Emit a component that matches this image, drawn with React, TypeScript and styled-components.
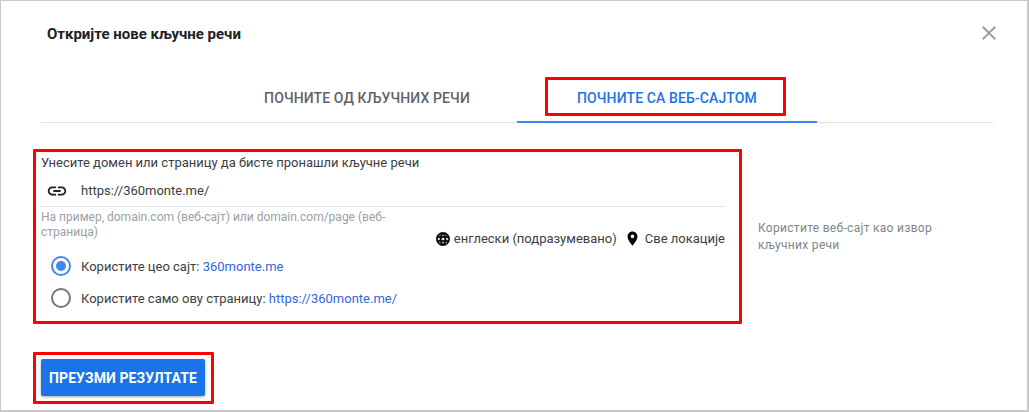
import React from 'react';
import styled, { createGlobalStyle } from 'styled-components';

const GlobalStyle = createGlobalStyle`
  html, body {
    margin: 0;
    padding: 0;
    background: #fff;
  }
  body {
    font-family: Roboto, "Noto Sans", sans-serif;
  }
`;

const Page = styled.div`
  width: 1029px;
  height: 412px;
  box-sizing: border-box;
  overflow: hidden;
  background: #c9c9c9;
  padding: 1px 2px 2px 1px;
`;

const Dialog = styled.div`
  height: 100%;
  box-sizing: border-box;
  background: #fff;
  padding: 0 34px 0 40px;
  display: flex;
  flex-direction: column;
`;

const TitleRow = styled.div`
  height: 72px;
  flex: none;
  display: flex;
  justify-content: space-between;
  align-items: flex-start;
`;

const Title = styled.h1`
  margin: 24px 0 0 6px;
  font-size: 15px;
  line-height: 18px;
  font-weight: 700;
  color: #202124;
`;

const CloseButton = styled.button`
  margin: 20px -8px 0 0;
  padding: 0;
  width: 24px;
  height: 24px;
  border: none;
  background: none;
  color: #9aa0a6;
`;

const TabBar = styled.div`
  height: 49px;
  flex: none;
  display: flex;
  justify-content: center;
  border-bottom: 1px solid #e0e0e0;
`;

const Tab = styled.div<{ $active?: boolean }>`
  position: relative;
  width: 300px;
  box-sizing: border-box;
  display: flex;
  align-items: center;
  justify-content: center;
  padding-top: 2px;
  font-size: 14px;
  font-weight: 500;
  letter-spacing: 0.12px;
  color: ${({ $active }) => ($active ? '#1a73e8' : '#5f6368')};
  border-bottom: 2px solid ${({ $active }) => ($active ? '#4285f4' : 'transparent')};
  margin-bottom: -1px;
`;

const TabHighlight = styled.span`
  position: absolute;
  left: 28px;
  top: 4px;
  width: 241px;
  height: 39px;
  box-sizing: border-box;
  border: 3px solid #f00;
  border-radius: 1px;
`;

const Content = styled.div`
  display: flex;
  margin: 26px 0 0 -8px;
`;

const FormBox = styled.div`
  width: 709px;
  height: 175px;
  flex: none;
  box-sizing: border-box;
  border: 3px solid #f00;
  border-radius: 1px;
  padding: 3px 14px 0 5px;
  display: flex;
  flex-direction: column;
`;

const FieldLabel = styled.label`
  font-size: 13px;
  line-height: 16px;
  color: #3c4043;
`;

const InputRow = styled.div`
  height: 32px;
  margin-top: 4px;
  flex: none;
  display: flex;
  align-items: center;
  border-bottom: 1px solid #e0e0e0;
  padding: 0 0 0 5px;
  box-sizing: border-box;
  gap: 13px;
  font-size: 13px;
  color: #3c4043;
`;

const LinkIcon = styled.svg`
  width: 22px;
  height: 22px;
  flex: none;
  color: #202124;
`;

const MetaRow = styled.div`
  height: 40px;
  flex: none;
  display: flex;
  justify-content: space-between;
  align-items: flex-start;
`;

const Hint = styled.p`
  margin: 3px 0 0;
  width: 350px;
  font-size: 12px;
  line-height: 14.5px;
  color: #9aa0a6;
`;

const Targeting = styled.div`
  margin-top: 23px;
  display: flex;
  align-items: center;
  font-size: 13px;
  line-height: 17px;
  color: #3c4043;
`;

const TargetIcon = styled.svg<{ $size: number; $gap: number }>`
  width: ${({ $size }) => $size}px;
  height: ${({ $size }) => $size}px;
  flex: none;
  margin-right: ${({ $gap }) => $gap}px;
  color: #000;
`;

const TargetItem = styled.span`
  margin-right: 7px;

  &:last-child {
    margin-right: 0;
  }
`;

const RadioGroup = styled.div`
  margin-top: 9px;
  display: flex;
  flex-direction: column;
  gap: 12px;
  padding-left: 10px;
`;

const RadioRow = styled.div`
  display: flex;
  align-items: center;
  height: 20px;
  gap: 10px;
  font-size: 13px;
  color: #3c4043;
`;

const RadioCircle = styled.span<{ $checked?: boolean }>`
  width: 20px;
  height: 20px;
  flex: none;
  box-sizing: border-box;
  border-radius: 50%;
  border: 2px solid ${({ $checked }) => ($checked ? '#4285f4' : '#757575')};
  display: flex;
  align-items: center;
  justify-content: center;

  &::after {
    content: '';
    width: 10px;
    height: 10px;
    border-radius: 50%;
    background: ${({ $checked }) => ($checked ? '#4285f4' : 'transparent')};
  }
`;

const Accent = styled.span`
  color: #3367d6;
`;

const SideNote = styled.p`
  margin: 71px 0 0 16px;
  width: 190px;
  font-size: 12px;
  line-height: 17px;
  letter-spacing: 0.3px;
  color: #80868b;
`;

const ActionBox = styled.div`
  margin: 28px 0 0 -8px;
  width: 181px;
  height: 52px;
  box-sizing: border-box;
  border: 3px solid #f00;
  border-radius: 1px;
  padding: 4px 0 0 5px;
`;

const PrimaryButton = styled.button`
  width: 164px;
  height: 37px;
  padding: 0;
  border: none;
  border-radius: 2px;
  background: #1a73e8;
  color: #fff;
  font-family: inherit;
  font-size: 14px;
  font-weight: 700;
  letter-spacing: 0.08px;
  box-shadow: 0 1px 3px rgba(60, 64, 67, 0.45);
`;

const App: React.FC = () => {
  return (
    <Page>
      <GlobalStyle />
      <Dialog>
        <TitleRow>
          <Title>Откријте нове кључне речи</Title>
          <CloseButton aria-label="Close">
            <svg viewBox="0 0 24 24" width="24" height="24">
              <path
                d="M19 6.41 17.59 5 12 10.59 6.41 5 5 6.41 10.59 12 5 17.59 6.41 19 12 13.41 17.59 19 19 17.59 13.41 12z"
                fill="currentColor"
              />
            </svg>
          </CloseButton>
        </TitleRow>

        <TabBar>
          <Tab>ПОЧНИТЕ ОД КЉУЧНИХ РЕЧИ</Tab>
          <Tab $active>
            ПОЧНИТЕ СА ВЕБ-САЈТОМ
            <TabHighlight />
          </Tab>
        </TabBar>

        <Content>
          <FormBox>
            <FieldLabel>Унесите домен или страницу да бисте пронашли кључне речи</FieldLabel>
            <InputRow>
              <LinkIcon viewBox="0 0 24 24">
                <path
                  d="M3.9 12c0-1.71 1.39-3.1 3.1-3.1h4V7H7c-2.76 0-5 2.24-5 5s2.24 5 5 5h4v-1.9H7c-1.71 0-3.1-1.39-3.1-3.1zM8 13h8v-2H8v2zm9-6h-4v1.9h4c1.71 0 3.1 1.39 3.1 3.1s-1.39 3.1-3.1 3.1h-4V17h4c2.76 0 5-2.24 5-5s-2.24-5-5-5z"
                  fill="currentColor"
                />
              </LinkIcon>
              https://360monte.me/
            </InputRow>
            <MetaRow>
              <Hint>На пример, domain.com (веб-сајт) или domain.com/page (веб-страница)</Hint>
              <Targeting>
                <TargetIcon viewBox="0 0 24 24" $size={16} $gap={3}>
                  <path
                    d="M11.99 2C6.47 2 2 6.48 2 12s4.47 10 9.99 10C17.52 22 22 17.52 22 12S17.52 2 11.99 2zm6.93 6h-2.95a15.65 15.65 0 0 0-1.38-3.56A8.03 8.03 0 0 1 18.92 8zM12 4.04c.83 1.2 1.48 2.53 1.91 3.96h-3.82c.43-1.43 1.08-2.76 1.91-3.96zM4.26 14C4.1 13.36 4 12.69 4 12s.1-1.36.26-2h3.38c-.08.66-.14 1.32-.14 2s.06 1.34.14 2H4.26zm.82 2h2.95c.32 1.25.78 2.45 1.38 3.56A7.987 7.987 0 0 1 5.08 16zm2.95-8H5.08a7.987 7.987 0 0 1 4.33-3.56A15.65 15.65 0 0 0 8.03 8zM12 19.96c-.83-1.2-1.48-2.53-1.91-3.96h3.82c-.43 1.43-1.08 2.76-1.91 3.96zM14.34 14H9.66c-.09-.66-.16-1.32-.16-2s.07-1.35.16-2h4.68c.09.65.16 1.32.16 2s-.07 1.34-.16 2zm.25 5.56c.6-1.11 1.06-2.31 1.38-3.56h2.95a8.03 8.03 0 0 1-4.33 3.56zM16.36 14c.08-.66.14-1.32.14-2s-.06-1.34-.14-2h3.38c.16.64.26 1.31.26 2s-.1 1.36-.26 2h-3.38z"
                    fill="currentColor"
                    stroke="currentColor"
                    strokeWidth="0.8"
                  />
                </TargetIcon>
                <TargetItem>енглески (подразумевано)</TargetItem>
                <TargetIcon viewBox="0 0 24 24" $size={17} $gap={4}>
                  <path
                    d="M12 2C8.13 2 5 5.13 5 9c0 5.25 7 13 7 13s7-7.75 7-13c0-3.87-3.13-7-7-7zm0 9.5a2.5 2.5 0 0 1 0-5 2.5 2.5 0 0 1 0 5z"
                    fill="currentColor"
                  />
                </TargetIcon>
                <TargetItem>Све локације</TargetItem>
              </Targeting>
            </MetaRow>
            <RadioGroup>
              <RadioRow>
                <RadioCircle $checked />
                <span>
                  Користите цео сајт: <Accent>360monte.me</Accent>
                </span>
              </RadioRow>
              <RadioRow>
                <RadioCircle />
                <span>
                  Користите само ову страницу: <Accent>https://360monte.me/</Accent>
                </span>
              </RadioRow>
            </RadioGroup>
          </FormBox>
          <SideNote>Користите веб-сајт као извор кључних речи</SideNote>
        </Content>

        <ActionBox>
          <PrimaryButton>ПРЕУЗМИ РЕЗУЛТАТЕ</PrimaryButton>
        </ActionBox>
      </Dialog>
    </Page>
  );
};

export default App;
